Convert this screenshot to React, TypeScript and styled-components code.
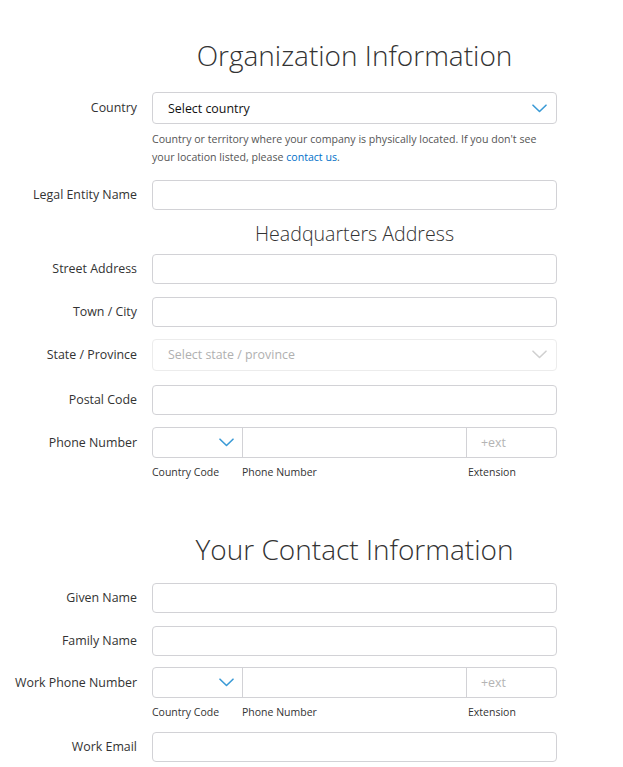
import React from 'react';
import styled, { createGlobalStyle } from 'styled-components';

const GlobalStyle = createGlobalStyle`
  body {
    margin: 0;
    background: #ffffff;
    font-family: "Open Sans", "Noto Sans", sans-serif;
    color: #333333;
  }
`;

const Page = styled.div`
  width: 623px;
  padding-top: 37px;
  padding-bottom: 10px;
`;

const Section = styled.section<{ gapTop?: number }>`
  padding-top: ${p => p.gapTop ?? 0}px;
`;

const Row = styled.div<{ mb?: number }>`
  display: grid;
  grid-template-columns: 137px 405px;
  column-gap: 15px;
  align-items: start;
  margin-bottom: ${p => p.mb ?? 13}px;
`;

const Title = styled.h1<{ size: number }>`
  grid-column: 2;
  margin: 0;
  text-align: center;
  font-weight: 300;
  font-size: ${p => p.size}px;
  line-height: 1.3;
  color: #333333;
  white-space: nowrap;
`;

const Label = styled.label<{ h?: number }>`
  text-align: right;
  font-size: 12.4px;
  color: #333333;
  line-height: ${p => p.h ?? 30}px;
  white-space: nowrap;
`;

const Field = styled.div`
  display: flex;
  flex-direction: column;
`;

const TextBox = styled.div`
  height: 30px;
  box-sizing: border-box;
  border: 1px solid #d2d2d6;
  border-radius: 4px;
  background: #fff;
`;

const SelectBox = styled.div<{ disabled?: boolean }>`
  height: 32px;
  box-sizing: border-box;
  border: 1px solid ${p => (p.disabled ? '#ececec' : '#d2d2d6')};
  border-radius: 4px;
  display: flex;
  align-items: center;
  justify-content: space-between;
  padding: 0 9px 0 15px;
  font-size: 12.4px;
  color: ${p => (p.disabled ? '#b0b0b0' : '#111111')};
`;

const Help = styled.p`
  margin: 6px 0 0;
  font-size: 10.6px;
  line-height: 18px;
  color: #555555;
`;

const Link = styled.a`
  color: #0070c9;
  text-decoration: none;
`;

const PhoneGroup = styled.div`
  display: grid;
  grid-template-columns: 89px 1fr 90px;
  height: 31px;
  box-sizing: border-box;
  border: 1px solid #d2d2d6;
  border-radius: 4px;
`;

const PhonePart = styled.div<{ divider?: boolean }>`
  display: flex;
  align-items: center;
  justify-content: flex-end;
  padding-right: 8px;
  border-left: ${p => (p.divider ? '1px solid #d2d2d6' : 'none')};
`;

const ExtPart = styled.div`
  display: flex;
  align-items: center;
  padding-left: 14px;
  border-left: 1px solid #d2d2d6;
  font-size: 12.4px;
  color: #b4b4b4;
`;

const SubLabels = styled.div`
  display: grid;
  grid-template-columns: 89px 1fr 90px;
  margin-top: 6px;
  font-size: 10.5px;
  line-height: 16px;
  color: #333333;
`;

const SubLabel = styled.span<{ indent?: number }>`
  padding-left: ${p => p.indent ?? 0}px;
`;

const Chevron: React.FC<{ color: string }> = ({ color }) => (
  <svg width="15" height="9" viewBox="0 0 15 9" fill="none">
    <path d="M1 1.2 L7.5 7.5 L14 1.2" stroke={color} strokeWidth="1.6" strokeLinecap="round" strokeLinejoin="round" />
  </svg>
);

const TextRow: React.FC<{ label: string; mb?: number }> = ({ label, mb }) => (
  <Row mb={mb}>
    <Label>{label}</Label>
    <TextBox />
  </Row>
);

const PhoneRow: React.FC<{ label: string; mb?: number }> = ({ label, mb }) => (
  <Row mb={mb}>
    <Label h={31}>{label}</Label>
    <Field>
      <PhoneGroup>
        <PhonePart>
          <Chevron color="#3a9ad6" />
        </PhonePart>
        <PhonePart divider />
        <ExtPart>+ext</ExtPart>
      </PhoneGroup>
      <SubLabels>
        <SubLabel>Country Code</SubLabel>
        <SubLabel indent={1}>Phone Number</SubLabel>
        <SubLabel indent={1}>Extension</SubLabel>
      </SubLabels>
    </Field>
  </Row>
);

const App: React.FC = () => (
  <Page>
    <GlobalStyle />
    <Section>
      <Row mb={19}>
        <Title size={28}>Organization Information</Title>
      </Row>
      <Row mb={14}>
        <Label h={32}>Country</Label>
        <Field>
          <SelectBox>
            Select country
            <Chevron color="#3a9ad6" />
          </SelectBox>
          <Help>
            Country or territory where your company is physically located. If you don't see
            <br />
            your location listed, please <Link href="#">contact us</Link>.
          </Help>
        </Field>
      </Row>
      <TextRow label="Legal Entity Name" mb={11} />
      <Row mb={7}>
        <Title size={19.6}>Headquarters Address</Title>
      </Row>
      <TextRow label="Street Address" />
      <TextRow label="Town / City" mb={12} />
      <Row mb={14}>
        <Label h={32}>State / Province</Label>
        <SelectBox disabled>
          Select state / province
          <Chevron color="#d0d0d0" />
        </SelectBox>
      </Row>
      <TextRow label="Postal Code" mb={12} />
      <PhoneRow label="Phone Number" mb={0} />
    </Section>
    <Section gapTop={51}>
      <Row mb={16}>
        <Title size={28}>Your Contact Information</Title>
      </Row>
      <TextRow label="Given Name" mb={13} />
      <TextRow label="Family Name" mb={11} />
      <PhoneRow label="Work Phone Number" mb={12} />
      <TextRow label="Work Email" />
    </Section>
  </Page>
);

export default App;
